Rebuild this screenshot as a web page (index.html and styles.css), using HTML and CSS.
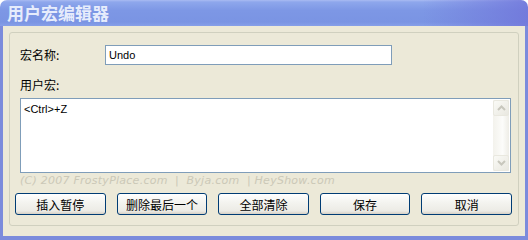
FILE: index.html
```html
<!DOCTYPE html>
<html lang="zh-CN">
<head>
    <meta charset="UTF-8">
    <title>用户宏编辑器</title>
    <link rel="stylesheet" href="styles.css">
</head>
<body>
    <div class="window">
        <div class="titlebar">用户宏编辑器</div>
        <div class="frame">
            <div class="group">
                <div class="name-row">
                    <label class="label name-label" for="macroName">宏名称:</label>
                    <div class="input">Undo</div>
                </div>
                <div class="label macro-label">用户宏:</div>
                <div class="editor">
                    <div class="editor-text">&lt;Ctrl&gt;+Z</div>
                    <div class="scrollbar">
                        <div class="sb-btn">
                            <svg width="9" height="6" viewBox="0 0 9 6"><path d="M1 5 L4.5 1.5 L8 5" fill="none" stroke="#c8c7bd" stroke-width="2"/></svg>
                        </div>
                        <div class="sb-track"></div>
                        <div class="sb-btn">
                            <svg width="9" height="6" viewBox="0 0 9 6"><path d="M1 1 L4.5 4.5 L8 1" fill="none" stroke="#c8c7bd" stroke-width="2"/></svg>
                        </div>
                    </div>
                </div>
                <div class="copyright">(C) 2007 FrostyPlace.com &nbsp;| &nbsp;Byja.com &nbsp;| HeyShow.com</div>
                <div class="buttons">
                    <button class="btn">插入暂停</button>
                    <button class="btn">删除最后一个</button>
                    <button class="btn">全部清除</button>
                    <button class="btn">保存</button>
                    <button class="btn">取消</button>
                </div>
            </div>
        </div>
    </div>
</body>
</html>
```

FILE: styles.css
```css
body {
    margin: 0;
    width: 528px;
    height: 240px;
    overflow: hidden;
    font-family: "Noto Sans CJK SC", "Liberation Sans", sans-serif;
    font-size: 12px;
    color: #000;
}
.window {
    width: 528px;
    height: 240px;
    display: flex;
    flex-direction: column;
}
.titlebar {
    height: 26px;
    box-sizing: border-box;
    padding-left: 7px;
    line-height: 25px;
    font-size: 17px;
    font-weight: bold;
    color: #e6ecfc;
    border-radius: 7px 7px 0 0;
    background:
        linear-gradient(to right, rgba(120, 120, 220, 0) 80%, rgba(112, 116, 218, 0.8) 100%),
        linear-gradient(to bottom, #a9bbf2 0, #8ea7ec 2px, #7d97e5 40%, #7a94e3 85%, #869fe8 100%);
}
.frame {
    flex: 1;
    background-color: #ece9d8;
    border: 3px solid #7b8bdc;
    border-top: none;
    border-bottom-width: 4px;
    padding: 6px 6px 0 6px;
}
.group {
    border: 1px solid #d0d0bf;
    border-radius: 3px;
    padding: 12px 6px 10px 10px;
    display: flex;
    flex-direction: column;
}
.name-row {
    display: flex;
    align-items: center;
    height: 20px;
}
.label {
    font-size: 12px;
    line-height: 16px;
}
.name-label {
    width: 85px;
}
.input {
    width: 287px;
    height: 20px;
    box-sizing: border-box;
    border: 1px solid #7f9db9;
    background: #fff;
    padding-left: 3px;
    font-family: "Liberation Sans", sans-serif;
    font-size: 11px;
    line-height: 18px;
}
.macro-label {
    margin-top: 12px;
    height: 16px;
    margin-bottom: 5px;
}
.editor {
    width: 491px;
    height: 75px;
    box-sizing: border-box;
    border: 1px solid #7f9db9;
    background: #fff;
    display: flex;
    padding: 1px;
}
.editor-text {
    flex: 1;
    padding: 2px 2px;
    font-family: "Liberation Sans", sans-serif;
    font-size: 11px;
    line-height: 14px;
}
.scrollbar {
    width: 16px;
    display: flex;
    flex-direction: column;
    background: linear-gradient(to right, #f3f2ec, #fcfcfa 60%, #eeede6);
}
.sb-btn {
    height: 16px;
    box-sizing: border-box;
    border: 1px solid #e9e8df;
    border-radius: 2px;
    background: linear-gradient(to bottom right, #fafaf6, #e9e8e0);
    display: flex;
    align-items: center;
    justify-content: center;
}
.sb-track {
    flex: 1;
}
.copyright {
    margin-top: 1px;
    height: 14px;
    line-height: 14px;
    font-family: "DejaVu Sans", Verdana, sans-serif;
    font-style: italic;
    font-size: 11px;
    letter-spacing: 0.25px;
    color: #cbc8b7;
    white-space: nowrap;
}
.buttons {
    margin-top: 5px;
    margin-left: -5px;
    display: flex;
    gap: 11px;
}
.btn {
    width: 91px;
    height: 22px;
    padding: 0;
    border: 1px solid #003c74;
    border-radius: 3px;
    background: linear-gradient(to bottom, #ffffff 0, #f4f4f0 40%, #ecebe5 85%, #d6d0c5 100%);
    font-family: "Noto Sans CJK SC", sans-serif;
    font-size: 12px;
    color: #000;
}
```
